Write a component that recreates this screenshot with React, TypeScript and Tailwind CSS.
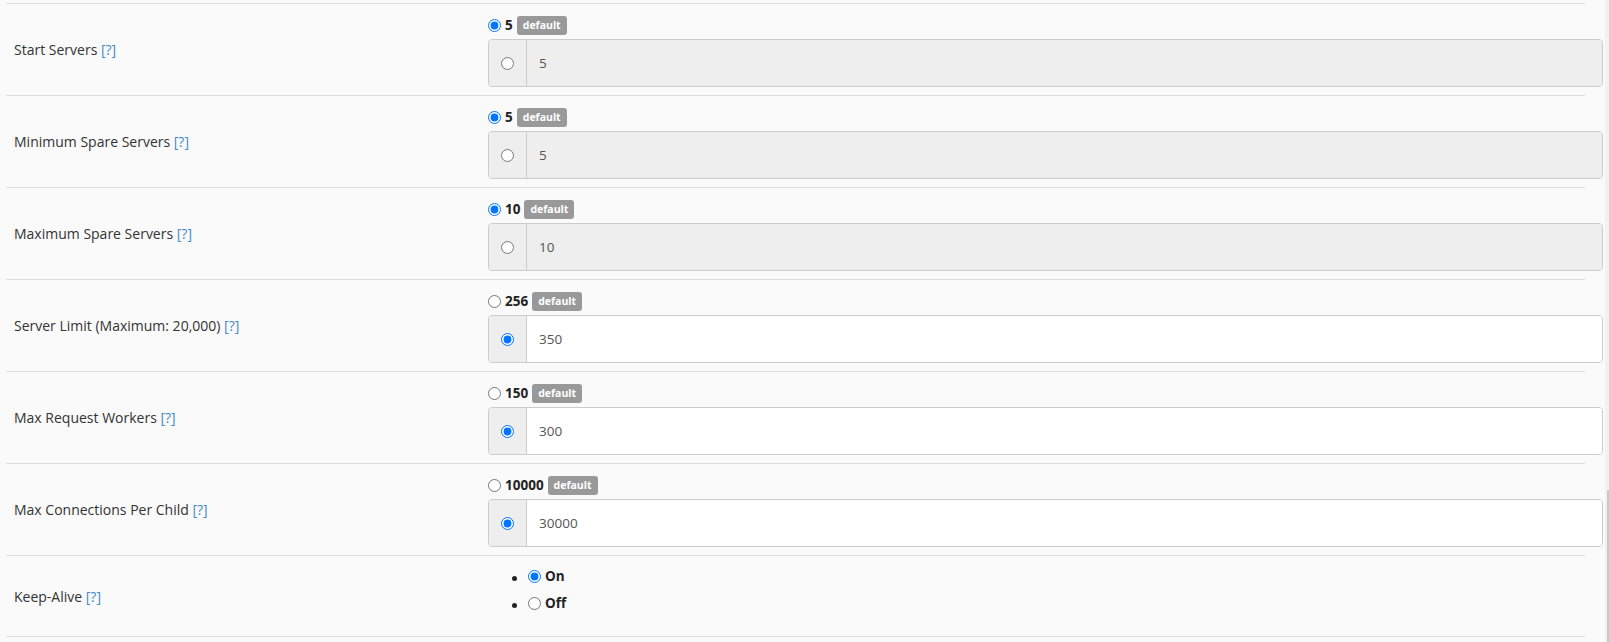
import React from "react";

type Row = {
  label: string;
  def: string;
  value: string;
  custom: boolean;
};

const ROWS: Row[] = [
  { label: "Start Servers", def: "5", value: "5", custom: false },
  { label: "Minimum Spare Servers", def: "5", value: "5", custom: false },
  { label: "Maximum Spare Servers", def: "10", value: "10", custom: false },
  { label: "Server Limit (Maximum: 20,000)", def: "256", value: "350", custom: true },
  { label: "Max Request Workers", def: "150", value: "300", custom: true },
  { label: "Max Connections Per Child", def: "10000", value: "30000", custom: true },
];

function Radio({ checked }: { checked: boolean }) {
  return (
    <input
      type="radio"
      readOnly
      checked={checked}
      className="m-0 w-[13px] h-[13px] shrink-0 accent-[#0075ff]"
    />
  );
}

function Label({ text }: { text: string }) {
  return (
    <div className="w-[482px] shrink-0 pl-[8px] text-[14px] text-[#333]">
      {text} <a className="text-[#428bca]">[?]</a>
    </div>
  );
}

function SettingRow({ row }: { row: Row }) {
  return (
    <div className="flex items-center w-[1579px] h-[92px] ml-[6px] border-t border-[#dcdcdc]">
      <Label text={row.label} />
      <div className="self-start pt-[12px] w-[1115px] shrink-0 flex flex-col gap-[4px]">
        <div className="flex items-center h-[19px]">
          <Radio checked={!row.custom} />
          <span className="ml-[4px] font-bold text-[13.5px] text-[#222]">{row.def}</span>
          <span className="ml-[4px] h-[19px] px-[6px] rounded-[3px] bg-[#999] text-white font-bold text-[10.5px] leading-[19px]">
            default
          </span>
        </div>
        <div className="flex h-[48px] border border-[#ccc] rounded-[4px] overflow-hidden">
          <div className="w-[38px] shrink-0 flex items-center justify-center bg-[#eee] border-r border-[#ccc]">
            <Radio checked={row.custom} />
          </div>
          <div
            className={
              "flex-1 flex items-center pl-[12px] text-[13.5px] text-[#555] " +
              (row.custom ? "bg-white" : "bg-[#eee]")
            }
          >
            {row.value}
          </div>
        </div>
      </div>
    </div>
  );
}

export default function App() {
  return (
    <div
      className="flex h-[642px] w-[1609px] overflow-hidden bg-[#fafafa]"
      style={{ fontFamily: '"Open Sans", "Noto Sans", sans-serif' }}
    >
      <div className="w-[1605px] shrink-0 pt-[3px]">
        <div className="flex flex-col">
          {ROWS.map((r, i) => (
            <SettingRow key={i} row={r} />
          ))}
          <div className="flex items-center w-[1579px] h-[82px] ml-[6px] border-t border-b border-[#dcdcdc]">
            <Label text="Keep-Alive" />
            <ul className="self-start mt-[7px] list-disc pl-[40px] text-[13.5px] font-bold text-[#222]">
              <li className="h-[27px]">
                <span className="flex items-center h-[27px] gap-[4px]">
                  <Radio checked={true} />
                  On
                </span>
              </li>
              <li className="h-[27px]">
                <span className="flex items-center h-[27px] gap-[4px]">
                  <Radio checked={false} />
                  Off
                </span>
              </li>
            </ul>
          </div>
        </div>
      </div>
      <div className="w-[4px] shrink-0 flex flex-col bg-[#f1f1f1]">
        <div className="h-[490px]" />
        <div className="flex-1 ml-[2px] bg-[#c8c8c8]" />
      </div>
    </div>
  );
}
